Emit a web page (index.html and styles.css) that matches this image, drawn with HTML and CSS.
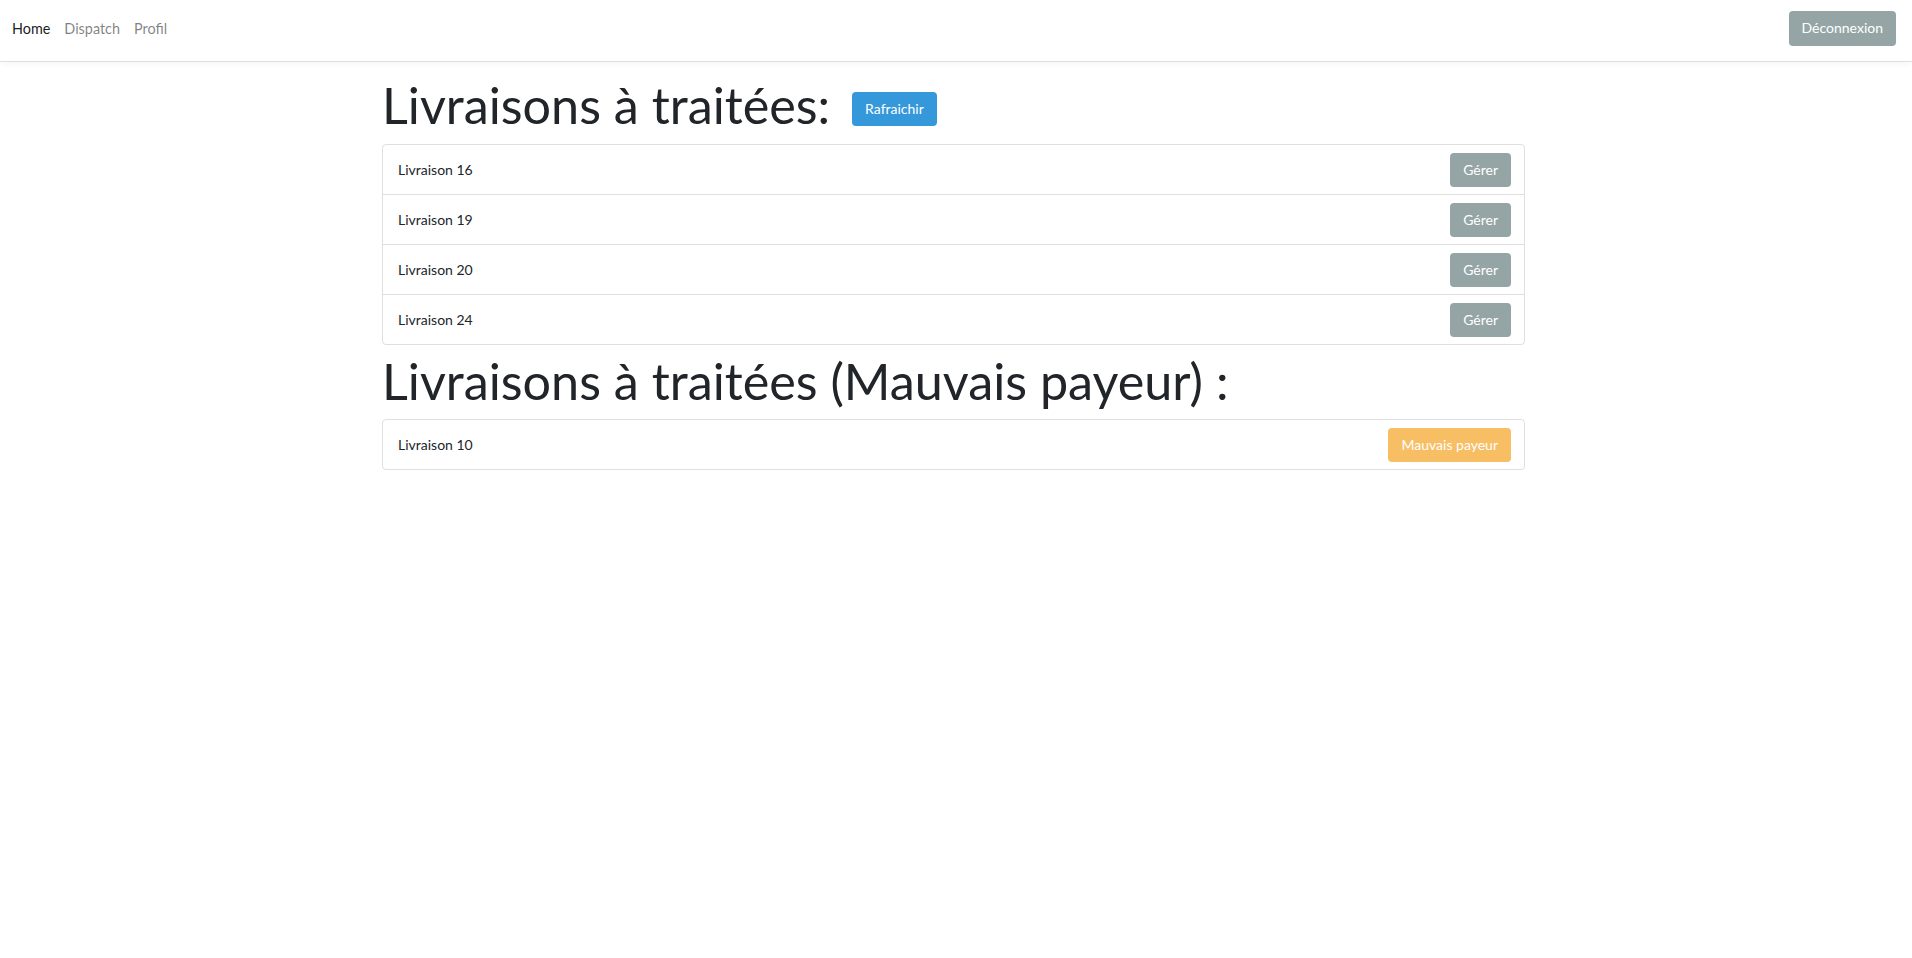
FILE: index.html
```html
<!DOCTYPE html>
<html lang="fr">
<head>
<meta charset="utf-8">
<title>Livraisons</title>
<link rel="stylesheet" href="styles.css">
</head>
<body>
<nav class="navbar">
  <div class="nav-links">
    <a class="nav-link active" href="#">Home</a>
    <a class="nav-link" href="#">Dispatch</a>
    <a class="nav-link" href="#">Profil</a>
  </div>
  <button class="btn btn-secondary btn-logout">Déconnexion</button>
</nav>
<main class="container">
  <div class="heading-row">
    <h1 class="title">Livraisons à traitées:</h1>
    <button class="btn btn-info">Rafraichir</button>
  </div>
  <ul class="list">
    <li class="list-item"><span>Livraison 16</span><button class="btn btn-secondary">Gérer</button></li>
    <li class="list-item"><span>Livraison 19</span><button class="btn btn-secondary">Gérer</button></li>
    <li class="list-item"><span>Livraison 20</span><button class="btn btn-secondary">Gérer</button></li>
    <li class="list-item"><span>Livraison 24</span><button class="btn btn-secondary">Gérer</button></li>
  </ul>
  <h1 class="title">Livraisons à traitées (Mauvais payeur) :</h1>
  <ul class="list">
    <li class="list-item"><span>Livraison 10</span><button class="btn btn-warning" disabled>Mauvais payeur</button></li>
  </ul>
</main>
</body>
</html>
```
FILE: styles.css
```css
* { box-sizing: border-box; }
html, body { margin: 0; padding: 0; }
body {
  font-family: Lato, "Noto Sans", "Liberation Sans", sans-serif;
  color: #212529;
  background: #fff;
  font-size: 14px;
}
.navbar {
  height: 62px;
  display: flex;
  align-items: flex-start;
  justify-content: space-between;
  padding: 11px 16px 0 12px;
  border-bottom: 1px solid #dfdfdf;
  box-shadow: 0 2px 6px rgba(0,0,0,0.04);
}
.nav-links {
  display: flex;
  align-items: center;
  height: 35px;
  gap: 14px;
}
.nav-link {
  font-size: 14.4px;
  line-height: 20px;
  color: rgba(0,0,0,0.5);
  text-decoration: none;
}
.nav-link.active { color: rgba(0,0,0,0.9); }
.btn {
  font-family: inherit;
  font-size: 14px;
  line-height: 20px;
  padding: 7px 13px;
  border: none;
  border-radius: 4px;
  color: #fff;
  cursor: pointer;
}
.btn-logout { padding: 7px 13px 8px; }
.btn-secondary { background: #95a5a6; }
.btn-info { background: #3498db; }
.btn-warning { background: #f39c12; }
.btn:disabled { opacity: 0.65; cursor: default; }
.container {
  width: 1143px;
  margin-left: calc(50% - 574px);
  padding-top: 13px;
}
.heading-row {
  display: flex;
  align-items: center;
  gap: 22px;
  margin-bottom: 9px;
}
.title {
  font-size: 50.3px;
  font-weight: 400;
  line-height: 60px;
  margin: 0;
}
.heading-row .title { margin: 0; }
.heading-row .btn { margin-top: 7px; }
main > .title { margin: 6px 0 8px; }
.list {
  list-style: none;
  margin: 0;
  padding: 0;
  border: 1px solid #dfdfdf;
  border-radius: 4px;
}
.list-item {
  height: 50px;
  display: flex;
  align-items: center;
  justify-content: space-between;
  padding: 0 13px 0 15px;
  border-bottom: 1px solid #dfdfdf;
}
.list-item:last-child { border-bottom: none; height: 49px; }
```
